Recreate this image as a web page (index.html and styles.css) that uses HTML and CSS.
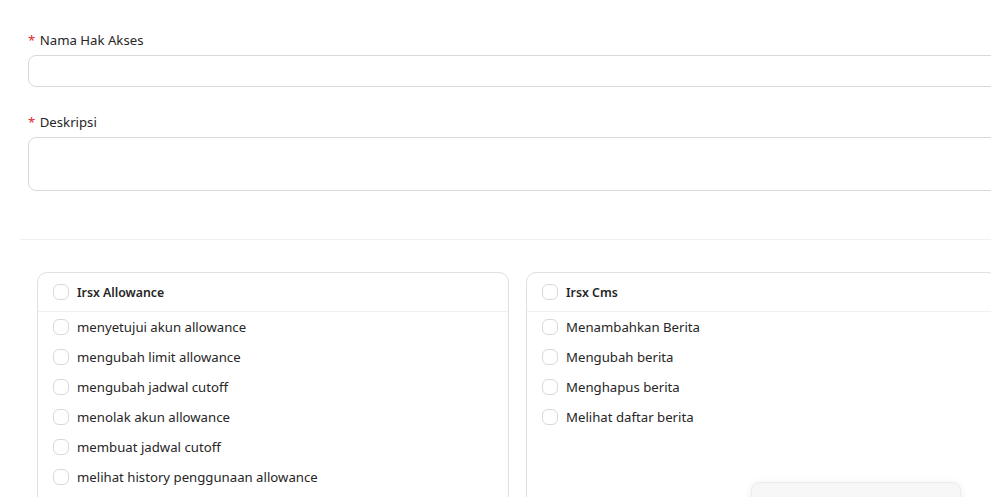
FILE: index.html
```html
<!DOCTYPE html>
<html>
<head>
	<title>Hak Akses</title>
	<link rel="stylesheet" href="styles.css">
</head>
<body>

	<div class="page">
		<form class="role-form">
			<div class="field">
				<label for="nama"><span class="required">*</span> Nama Hak Akses</label>
				<input type="text" id="nama" name="nama">
			</div>
			<div class="field">
				<label for="deskripsi"><span class="required">*</span> Deskripsi</label>
				<textarea id="deskripsi" name="deskripsi"></textarea>
			</div>
		</form>

		<hr class="divider">

		<div class="groups">
			<div class="group">
				<div class="group-head">
					<span class="check"></span>
					<span>Irsx Allowance</span>
				</div>
				<ul class="group-list">
					<li><span class="check"></span>menyetujui akun allowance</li>
					<li><span class="check"></span>mengubah limit allowance</li>
					<li><span class="check"></span>mengubah jadwal cutoff</li>
					<li><span class="check"></span>menolak akun allowance</li>
					<li><span class="check"></span>membuat jadwal cutoff</li>
					<li><span class="check"></span>melihat history penggunaan allowance</li>
				</ul>
			</div>
			<div class="group">
				<div class="group-head">
					<span class="check"></span>
					<span>Irsx Cms</span>
				</div>
				<ul class="group-list">
					<li><span class="check"></span>Menambahkan Berita</li>
					<li><span class="check"></span>Mengubah berita</li>
					<li><span class="check"></span>Menghapus berita</li>
					<li><span class="check"></span>Melihat daftar berita</li>
				</ul>
			</div>
		</div>
	</div>

	<div class="float-panel"></div>

</body>
</html>
```

FILE: styles.css
```css
html, body {
	margin: 0;
	overflow: hidden;
	height: 497px;
}

body {
	background: #FFFFFF;
	color: #262626;
	font-family: "Noto Sans", "Liberation Sans", sans-serif;
	font-size: 13.2px;
}

.page {
	width: 1020px;
	padding-top: 29px;
}

.role-form {
	padding-left: 28px;
}

.field {
	margin-bottom: 24px;
}

.field label {
	display: block;
	line-height: 22px;
	margin-bottom: 4px;
}

.required {
	color: #E0282E;
	margin-right: 1px;
}

.field input,
.field textarea {
	border: 1px solid #D9D9D9;
	border-radius: 8px;
	box-sizing: border-box;
	display: block;
	font-family: inherit;
	font-size: 14px;
	padding: 4px 11px;
	resize: none;
	width: 100%;
}

.field input {
	height: 32px;
}

.field textarea {
	height: 54px;
}

.divider {
	border: none;
	border-top: 1px solid #F0F0F0;
	margin: 48px 0 32px 20px;
}

.groups {
	display: grid;
	gap: 17px;
	grid-template-columns: 472px 472px;
	padding-left: 37px;
}

.group {
	border: 1px solid #E0E0E0;
	border-radius: 10px;
	height: 260px;
}

.group-head {
	align-items: center;
	border-bottom: 1px solid #F0F0F0;
	display: flex;
	font-weight: 600;
	font-size: 12.3px;
	gap: 8px;
	height: 38px;
	padding-left: 15px;
}

.group-list {
	list-style: none;
	margin: 0;
	padding: 0;
}

.group-list li {
	align-items: center;
	display: flex;
	gap: 8px;
	height: 30px;
	padding-left: 15px;
}

.check {
	border: 1px solid #D9D9D9;
	border-radius: 6px;
	box-sizing: border-box;
	display: inline-block;
	flex: none;
	height: 16px;
	width: 16px;
}

.float-panel {
	background: #F7F7F7;
	border: 1px solid #EBEBEB;
	border-radius: 8px;
	box-shadow: 0 2px 8px rgba(0, 0, 0, 0.08);
	height: 60px;
	left: 751px;
	position: absolute;
	top: 482px;
	width: 208px;
}
```
